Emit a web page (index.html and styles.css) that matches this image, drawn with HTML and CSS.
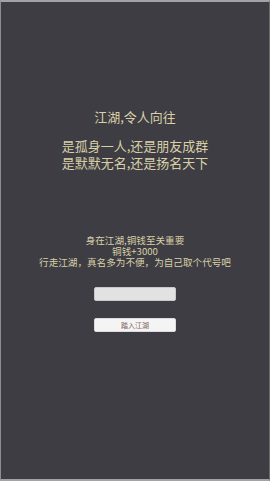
FILE: index.html
```html
<!DOCTYPE html>
<html lang="zh">
<head>
    <meta charset="UTF-8">
    <meta name="viewport" content="width=device-width, initial-scale=1.0">
    <title>江湖</title>
    <link rel="stylesheet" href="styles.css">
</head>
<body>
    <div class="screen">
        <p class="title">江湖,令人向往</p>
        <p class="verse">是孤身一人,还是朋友成群<br>是默默无名,还是扬名天下</p>
        <p class="notice">身在江湖,铜钱至关重要<br>铜钱+3000<br>行走江湖，真名多为不便，为自己取个代号吧</p>
        <input type="text" class="name-input">
        <button class="enter-btn">踏入江湖</button>
    </div>
</body>
</html>
```

FILE: styles.css
```css
html, body {
    margin: 0;
    padding: 0;
    background: #3e3d43;
}

.screen {
    box-sizing: border-box;
    width: 270px;
    height: 481px;
    border-top: 2px solid #a3a3a6;
    border-left: 1px solid #8e8e92;
    border-bottom: 2px solid #a3a3a6;
    border-right: 1px solid #6a6a6e;
    padding-top: 106px;
    display: flex;
    flex-direction: column;
    align-items: center;
    font-family: "Noto Sans CJK SC", "Noto Sans", sans-serif;
    color: #d9d0a8;
    text-align: center;
}

p {
    margin: 0;
}

.title {
    font-size: 13px;
    line-height: 17px;
}

.verse {
    margin-top: 12px;
    font-size: 13px;
    line-height: 17px;
}

.notice {
    margin-top: 64px;
    font-size: 9.6px;
    line-height: 11px;
    white-space: nowrap;
}

.name-input {
    box-sizing: border-box;
    margin-top: 19px;
    width: 82px;
    height: 14px;
    border: 1px solid #c9c9c9;
    border-radius: 2px;
    background: #e2e2e2;
    padding: 0;
}

.enter-btn {
    box-sizing: border-box;
    margin-top: 17px;
    width: 82px;
    height: 14px;
    border: 1px solid #dcdcdc;
    border-radius: 2px;
    background: #f5f4f4;
    color: #7b6258;
    font-family: "Noto Sans CJK SC", sans-serif;
    font-size: 7px;
    line-height: 12px;
    padding: 0;
}
```
